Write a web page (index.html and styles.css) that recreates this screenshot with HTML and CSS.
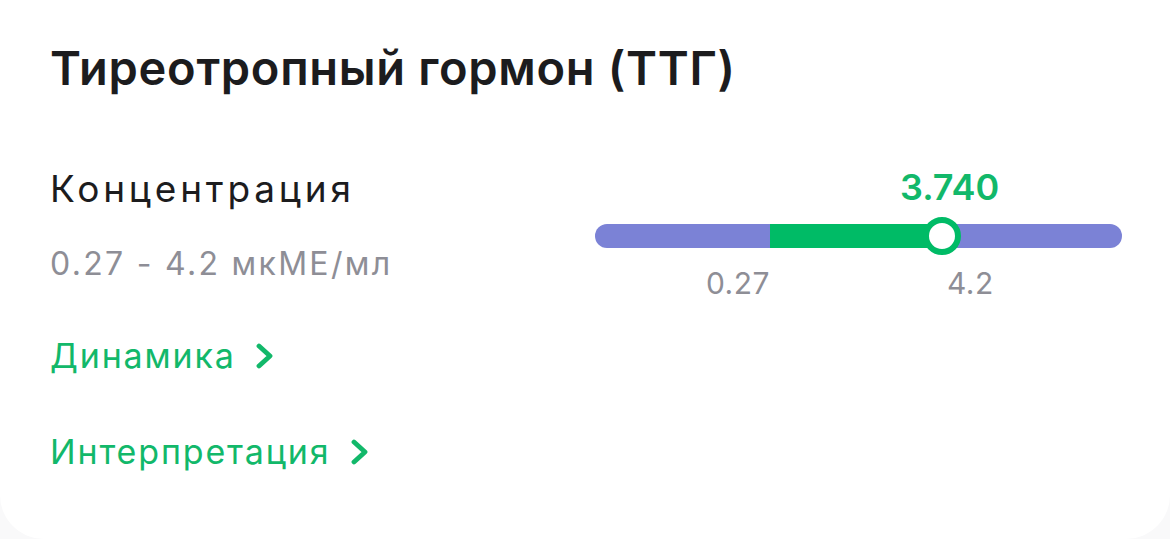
FILE: index.html
```html
<!DOCTYPE html>
<html lang="ru">
<head>
    <meta charset="UTF-8">
    <meta name="viewport" content="width=device-width, initial-scale=1.0">
    <title>ТТГ</title>
    <link rel="stylesheet" href="styles.css">
</head>
<body>
    <div class="card">
        <h1 class="title">Тиреотропный гормон (ТТГ)</h1>

        <div class="result">
            <div class="result-info">
                <div class="param">Концентрация</div>
                <div class="norm">0.27 - 4.2 мкМЕ/мл</div>
            </div>

            <div class="scale">
                <div class="scale-value">3.740</div>
                <div class="track">
                    <div class="track-norm"></div>
                    <div class="knob"></div>
                </div>
                <div class="scale-labels">
                    <span class="label-min">0.27</span>
                    <span class="label-max">4.2</span>
                </div>
            </div>
        </div>

        <a class="link" href="#">Динамика
            <svg class="chevron" width="18" height="26" viewBox="0 0 18 26"><polyline points="3,3 14,13 3,23" fill="none" stroke="currentColor" stroke-width="4.8" stroke-linecap="round" stroke-linejoin="round"/></svg>
        </a>
        <a class="link" href="#">Интерпретация
            <svg class="chevron" width="18" height="26" viewBox="0 0 18 26"><polyline points="3,3 14,13 3,23" fill="none" stroke="currentColor" stroke-width="4.8" stroke-linecap="round" stroke-linejoin="round"/></svg>
        </a>
    </div>
</body>
</html>
```

FILE: styles.css
```css
body {
    margin: 0;
    background-color: #f9f9fa;
    font-family: Inter, "Noto Sans", sans-serif;
}
.card {
    background-color: white;
    height: 539px;
    box-sizing: border-box;
    padding: 41px 48px 0 50px;
    border-radius: 0 0 44px 44px;
}
.title {
    margin: 0;
    font-size: 47px;
    line-height: 54px;
    font-weight: 600;
    color: #1c1c1e;
    letter-spacing: 0.7px;
}
.result {
    display: flex;
    align-items: flex-start;
    justify-content: space-between;
    margin-top: 74px;
}
.param {
    font-size: 37px;
    line-height: 40px;
    color: #1c1c1e;
    letter-spacing: 3.8px;
}
.norm {
    margin-top: 37px;
    font-size: 32px;
    line-height: 36px;
    color: #8e8e96;
    letter-spacing: 2.3px;
}
.scale {
    width: 527px;
    margin-top: -2px;
}
.scale-value {
    font-size: 36px;
    line-height: 40px;
    font-weight: 600;
    color: #12b86a;
    padding-left: 305px;
}
.track {
    position: relative;
    height: 24px;
    margin-top: 17px;
    border-radius: 12px;
    background-color: #7b82d6;
}
.track-norm {
    margin-left: 175px;
    width: 175px;
    height: 24px;
    background-color: #00bb66;
}
.knob {
    position: absolute;
    left: 328px;
    top: -7px;
    width: 26px;
    height: 26px;
    border: 6px solid #00bb66;
    border-radius: 50%;
    background-color: white;
}
.scale-labels {
    display: flex;
    margin-top: 19px;
    font-size: 30px;
    line-height: 32px;
    color: #8e8e96;
    letter-spacing: 0.5px;
}
.label-min {
    width: 175px;
    text-align: right;
}
.label-max {
    margin-left: 177px;
}
.link {
    display: flex;
    align-items: center;
    gap: 20px;
    width: max-content;
    margin-top: 37px;
    font-size: 34px;
    line-height: 40px;
    color: #12b86a;
    text-decoration: none;
    letter-spacing: 1.85px;
}
.link + .link {
    margin-top: 56px;
}
.chevron {
    flex: none;
}
```
